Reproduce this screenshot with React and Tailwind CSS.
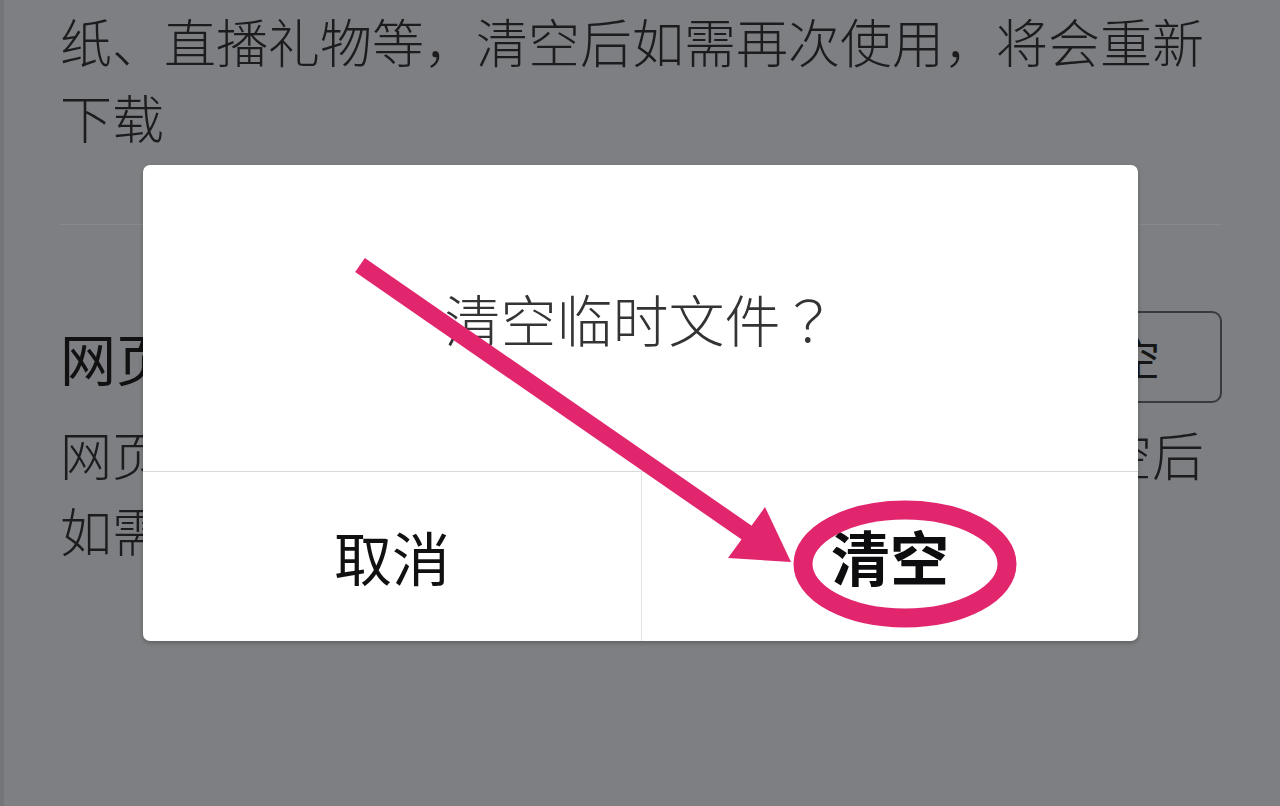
export default function App() {
  return (
    <div className="relative w-[1280px] h-[806px] overflow-hidden bg-[#7e7f82] border-l-[4px] border-l-[#747578] font-['Noto_Sans_CJK_SC','Noto_Sans',sans-serif]">
      {/* background page content */}
      <div className="pl-[56px] pr-[58px] pt-[3px]">
        <p className="text-[52px] leading-[76px] font-light text-[#1c1c1e] whitespace-nowrap">纸、直播礼物等，清空后如需再次使用，将会重新</p>
        <p className="text-[52px] leading-[76px] font-light text-[#1c1c1e] whitespace-nowrap">下载</p>
        <div className="mt-[69px] h-px bg-[#88898c]" />
        <div className="mt-[86px] h-[92px] flex items-center justify-between">
          <span className="text-[56px] text-[#111112] whitespace-nowrap">网页缓存</span>
          <div className="h-[92px] px-[60px] flex items-center rounded-[10px] border-2 border-[#3a3a3d] text-[44px] text-[#161617]">清空</div>
        </div>
        <div className="mt-[13px]">
          <p className="text-[52px] leading-[76px] font-light text-[#1c1c1e] whitespace-nowrap">网页浏览时产生的图片、视频等临时文件，清空后</p>
          <p className="text-[52px] leading-[76px] font-light text-[#1c1c1e] whitespace-nowrap">如需再次浏览，将会重新加载</p>
        </div>
      </div>

      {/* dialog overlay */}
      <div className="absolute left-[139px] top-[165px] w-[995px] h-[476px] bg-white rounded-[7px] shadow-[0_2px_4px_rgba(0,0,0,0.25)] flex flex-col overflow-hidden">
        <div className="h-[306px] flex items-center justify-center">
          <span className="text-[56px] font-light text-[#343436] whitespace-nowrap">
            清空临时文件<span className="font-['Noto_Sans_CJK_TC',sans-serif]">？</span>
          </span>
        </div>
        <div className="flex-1 flex border-t border-[#dadadc]">
          <div className="w-[498px] flex items-center justify-center text-[58px] text-[#111]">取消</div>
          <div className="flex-1 flex items-center justify-center border-l border-[#e2e2e4] text-[59px] font-bold text-[#0d0d0f]">清空</div>
        </div>
      </div>

      {/* annotation: arrow + ellipse */}
      <svg className="absolute left-[-4px] top-0 pointer-events-none" width="1280" height="806" viewBox="0 0 1280 806">
        <line x1="360" y1="265" x2="753" y2="537" stroke="#e2266e" strokeWidth="17" strokeLinecap="butt" />
        <polygon points="728,558 765,507 791,562" fill="#e2266e" />
        <ellipse cx="905" cy="564" rx="102" ry="54" fill="none" stroke="#e2266e" strokeWidth="19" />
      </svg>
    </div>
  );
}
